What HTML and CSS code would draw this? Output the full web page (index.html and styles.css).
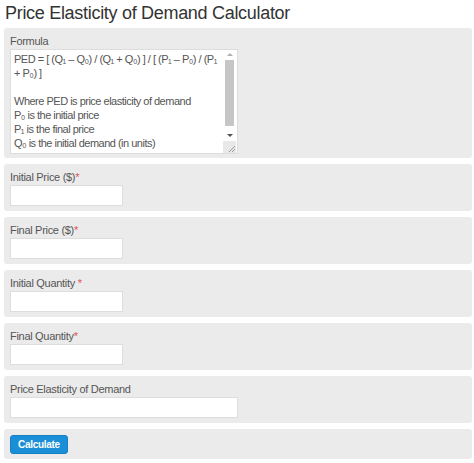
FILE: index.html
```html
<!DOCTYPE html>
<html>
<head>
    <title>Price Elasticity of Demand Calculator</title>
    <link rel="stylesheet" href="styles.css">
</head>
<body>
    <h1 class="title">Price Elasticity of Demand Calculator</h1>
    <form class="calc" id="pedForm">
        <div class="panel formula-panel">
            <label>Formula</label>
            <div class="formula">
                <div class="formula-text">PED = [ (Q₁ – Q₀) / (Q₁ + Q₀) ] / [ (P₁ – P₀) / (P₁ + P₀) ]

Where PED is price elasticity of demand
P₀ is the initial price
P₁ is the final price
Q₀ is the initial demand (in units)
Q₁ is the final demand (in units)</div>
                <div class="scrollbar">
                    <span class="sb-up"></span>
                    <span class="sb-thumb"></span>
                    <span class="sb-track"></span>
                    <span class="sb-down"></span>
                    <span class="sb-grip">
                        <svg width="9" height="9" viewBox="0 0 9 9">
                            <path d="M8 2L2 8M8 5L5 8" stroke="#9a9a9a" stroke-width="1" fill="none"/>
                        </svg>
                    </span>
                </div>
            </div>
        </div>
        <div class="panel">
            <label for="p0">Initial Price ($)<span class="req">*</span></label>
            <input type="text" id="p0" class="field">
        </div>
        <div class="panel">
            <label for="p1">Final Price ($)<span class="req">*</span></label>
            <input type="text" id="p1" class="field">
        </div>
        <div class="panel">
            <label for="q0">Initial Quantity <span class="req">*</span></label>
            <input type="text" id="q0" class="field">
        </div>
        <div class="panel">
            <label for="q1">Final Quantity<span class="req">*</span></label>
            <input type="text" id="q1" class="field">
        </div>
        <div class="panel">
            <label for="ped">Price Elasticity of Demand</label>
            <input type="text" id="ped" class="field wide" readonly>
        </div>
        <div class="panel buttons">
            <button type="button" class="calc-btn">Calculate</button>
        </div>
    </form>
</body>
</html>
```

FILE: styles.css
```css
body {
    font-family: Arial, "Liberation Sans", sans-serif;
    margin: 0;
    padding: 0 2px 0 4px;
    background-color: #fff;
    color: #555;
}

.title {
    font-size: 18px;
    font-weight: normal;
    letter-spacing: -0.3px;
    color: #333;
    margin: 0;
    padding: 3px 0 0 1px;
    height: 25px;
}

.calc {
    display: flex;
    flex-direction: column;
    gap: 6px;
}

.panel {
    background-color: #ebebeb;
    border-radius: 3px;
    padding: 6px 6px 5px 6px;
    display: flex;
    flex-direction: column;
    align-items: flex-start;
}

.formula-panel {
    padding-bottom: 4px;
}

.panel label {
    font-size: 11px;
    letter-spacing: -0.3px;
    color: #555;
    line-height: 14px;
    margin-bottom: 1px;
}

.req {
    color: #e0525d;
}

.field {
    width: 113px;
    height: 21px;
    box-sizing: border-box;
    border: 1px solid #ddd;
    background: #fff;
    margin: 0;
    padding: 2px 4px;
}

.field.wide {
    width: 228px;
}

/* formula box: text plus a drawn scrollbar */
.formula {
    width: 228px;
    height: 105px;
    box-sizing: border-box;
    border: 1px solid #ddd;
    background: #fff;
    display: flex;
}

.formula-text {
    flex: 1;
    overflow: hidden;
    white-space: pre-wrap;
    padding: 2px 0 0 3px;
    font-size: 11px;
    letter-spacing: -0.5px;
    line-height: 14px;
    color: #555;
}

.scrollbar {
    width: 15px;
    display: flex;
    flex-direction: column;
    align-items: center;
}

.sb-up {
    margin-top: 3px;
    height: 0;
    width: 0;
    border-left: 3px solid transparent;
    border-right: 3px solid transparent;
    border-bottom: 3px solid #b0b0b0;
}

.sb-thumb {
    margin-top: 4px;
    width: 9px;
    height: 66px;
    background: #c6c6c6;
}

.sb-track {
    flex: 1;
}

.sb-down {
    height: 0;
    width: 0;
    border-left: 3px solid transparent;
    border-right: 3px solid transparent;
    border-top: 3px solid #505050;
    margin-bottom: 4px;
}

.sb-grip {
    width: 13px;
    height: 12px;
    background: #e8e8e8;
    display: flex;
    align-items: flex-end;
    justify-content: flex-end;
}

.buttons {
    padding: 6px 6px 5px 6px;
}

.calc-btn {
    background-color: #1a8fd8;
    color: #fff;
    border: 1px solid #1680c4;
    border-radius: 3px;
    font-family: Arial, "Liberation Sans", sans-serif;
    font-size: 10px;
    font-weight: bold;
    letter-spacing: -0.3px;
    width: 58px;
    height: 19px;
    padding: 0;
    cursor: pointer;
}
```
